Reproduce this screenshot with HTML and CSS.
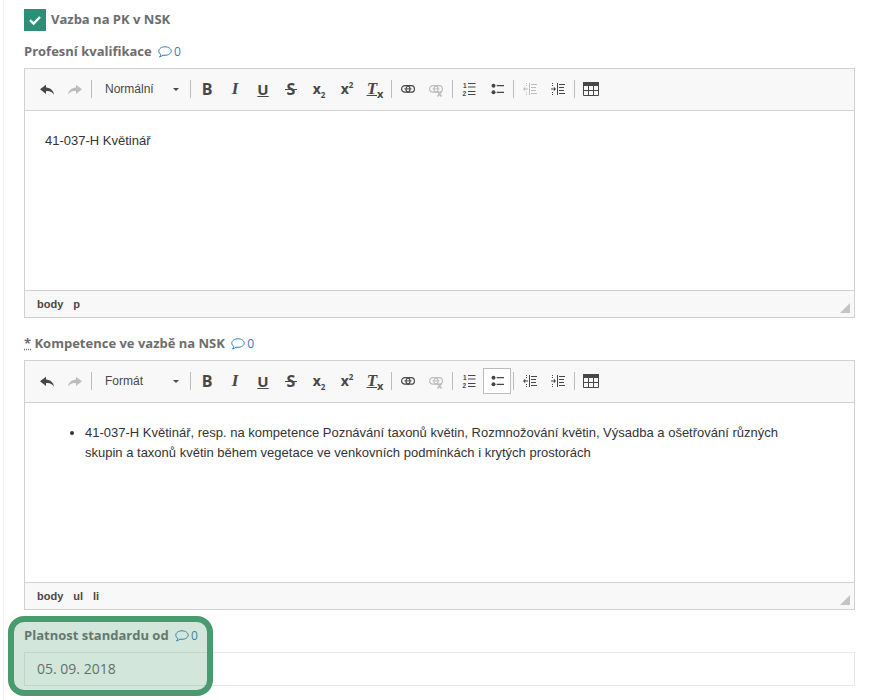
FILE: index.html
```html
<!DOCTYPE html>
<html lang="cs">
<head>
<meta charset="utf-8">
<title>Standard</title>
<link rel="stylesheet" href="styles.css">
</head>
<body>
<svg class="defs" width="0" height="0" aria-hidden="true">
  <symbol id="i-undo" viewBox="0 0 16 16"><path d="M7 3.700 1 8.300l6 4.600V10.200c3.500-.5 6 .7 8 3.500C14.500 9.500 11.600 6.800 7 6.500z"/></symbol>
  <symbol id="i-redo" viewBox="0 0 16 16"><path d="M9 3.700l6 4.600-6 4.600V10.200c-3.500-.5-6 .7-8 3.500C1.500 9.500 4.400 6.800 9 6.500z"/></symbol>
  <symbol id="i-link" viewBox="0 0 16 16"><g fill="none" stroke="currentColor" stroke-width="1.200"><rect x="1.600" y="4.600" width="8.400" height="6.600" rx="3.300"/><rect x="6" y="4.600" width="8.400" height="6.600" rx="3.300"/></g><path d="M4.500 7.400h7v1h-7z"/></symbol>
  <symbol id="i-unlink" viewBox="0 0 16 16"><g fill="none" stroke="currentColor" stroke-width="1.200"><rect x="1.600" y="4.600" width="8.400" height="6.600" rx="3.300"/><rect x="6" y="4.600" width="8.400" height="6.600" rx="3.300"/></g><path d="M4.500 7.400h7v1h-7z"/><path d="M9.500 10.500l4 5M13.500 10.500l-4 5" stroke="currentColor" stroke-width="1.600"/></symbol>
  <symbol id="i-ul" viewBox="0 0 16 16"><circle cx="4.500" cy="4.700" r="2"/><circle cx="4.500" cy="11.300" r="2"/><path d="M7.700 4h7.300v1.200H7.700zM7.700 10.700h7.300v1.200H7.700z"/></symbol>
  <symbol id="i-outdent" viewBox="0 0 16 16"><path d="M7 2h1v12H7zM9 3h6v1H9zM9 6h5v1H9zM9 9h5v1H9zM9 12h6v1H9zM2 7.500h4v1H2zM1 8l2.200-2.200v4.400z"/><path d="M4 2h1v1H4zM4 4h1v1H4zM4 11h1v1H4zM4 13h1v1H4z"/></symbol>
  <symbol id="i-indent" viewBox="0 0 16 16"><path d="M7 2h1v12H7zM9 3h6v1H9zM9 6h5v1H9zM9 9h5v1H9zM9 12h6v1H9zM1 7.500h3v1H1zM6 8 3.800 5.800v4.400z"/><path d="M2 2h1v1H2zM2 4h1v1H2zM2 11h1v1H2zM2 13h1v1H2z"/></symbol>
  <symbol id="i-table" viewBox="0 0 16 16"><path d="M0 1h16v4H0z"/><path d="M.5 4.500h15v10H.5zM5.500 4.500v10M10.500 4.500v10M.5 9.500h15" fill="none" stroke="currentColor"/></symbol>
  <symbol id="i-comment" viewBox="0 0 14 12"><path d="M7 .800c3.300 0 6.200 1.800 6.200 4.300S10.300 9.300 7 9.300c-.7 0-1.300 0-2-.2-.9.8-2 1.500-3.500 1.900.7-.8 1.200-1.600 1.300-2.500C1.700 7.800.8 6.600.8 5.100.8 2.600 3.700.8 7 .800z" fill="none" stroke="currentColor" stroke-width="1"/></symbol>
</svg>

<main class="page">
  <div class="check-row">
    <span class="checkbox"><svg viewBox="0 0 22 22" width="22" height="22"><path d="M6 11.200l3.600 3.400L16 8" fill="none" stroke="#fff" stroke-width="2.400"/></svg></span>
    <span class="check-label">Vazba na PK v NSK</span>
  </div>

  <div class="field">
    <div class="label">Profesní kvalifikace <span class="comments"><svg class="c-icon"><use href="#i-comment"/></svg>0</span></div>
    <div class="editor">
      <div class="toolbar">
        <span class="btn"><svg class="ico"><use href="#i-undo"/></svg></span>
        <span class="btn off"><svg class="ico"><use href="#i-redo"/></svg></span>
        <span class="sep"></span>
        <span class="combo"><span>Normální</span><span class="caret"></span></span>
        <span class="sep"></span>
        <span class="btn"><span class="g g-b">B</span></span>
        <span class="btn"><span class="g g-i">I</span></span>
        <span class="btn"><span class="g g-u">U</span></span>
        <span class="btn"><span class="g g-s">S</span></span>
        <span class="btn"><span class="g g-x">x<sub>2</sub></span></span>
        <span class="btn"><span class="g g-x">x<sup>2</sup></span></span>
        <span class="btn"><span class="g g-t"><span class="g-tt">T</span><sub>x</sub></span></span>
        <span class="sep"></span>
        <span class="btn"><svg class="ico"><use href="#i-link"/></svg></span>
        <span class="btn off"><svg class="ico"><use href="#i-unlink"/></svg></span>
        <span class="sep"></span>
        <span class="btn"><svg class="ico" viewBox="0 0 16 16"><path d="M7 2h7.500v1H7zM7 5.500h7.500v1H7zM7 10h7.500v1H7zM7 13h7.500v1H7z"/><text x="2" y="7" class="num">1</text><text x="1.500" y="14.500" class="num">2</text></svg></span>
        <span class="btn"><svg class="ico"><use href="#i-ul"/></svg></span>
        <span class="sep"></span>
        <span class="btn off"><svg class="ico"><use href="#i-outdent"/></svg></span>
        <span class="btn"><svg class="ico"><use href="#i-indent"/></svg></span>
        <span class="sep"></span>
        <span class="btn"><svg class="ico"><use href="#i-table"/></svg></span>
      </div>
      <div class="content"><p>41-037-H Květinář</p></div>
      <div class="path"><span>body</span><span>p</span><i class="grip"></i></div>
    </div>
  </div>

  <div class="field">
    <div class="label"><abbr class="req">*</abbr> Kompetence ve vazbě na NSK <span class="comments"><svg class="c-icon"><use href="#i-comment"/></svg>0</span></div>
    <div class="editor">
      <div class="toolbar">
        <span class="btn"><svg class="ico"><use href="#i-undo"/></svg></span>
        <span class="btn off"><svg class="ico"><use href="#i-redo"/></svg></span>
        <span class="sep"></span>
        <span class="combo"><span>Formát</span><span class="caret"></span></span>
        <span class="sep"></span>
        <span class="btn"><span class="g g-b">B</span></span>
        <span class="btn"><span class="g g-i">I</span></span>
        <span class="btn"><span class="g g-u">U</span></span>
        <span class="btn"><span class="g g-s">S</span></span>
        <span class="btn"><span class="g g-x">x<sub>2</sub></span></span>
        <span class="btn"><span class="g g-x">x<sup>2</sup></span></span>
        <span class="btn"><span class="g g-t"><span class="g-tt">T</span><sub>x</sub></span></span>
        <span class="sep"></span>
        <span class="btn"><svg class="ico"><use href="#i-link"/></svg></span>
        <span class="btn off"><svg class="ico"><use href="#i-unlink"/></svg></span>
        <span class="sep"></span>
        <span class="btn"><svg class="ico" viewBox="0 0 16 16"><path d="M7 2h7.500v1H7zM7 5.500h7.500v1H7zM7 10h7.500v1H7zM7 13h7.500v1H7z"/><text x="2" y="7" class="num">1</text><text x="1.500" y="14.500" class="num">2</text></svg></span>
        <span class="btn on"><svg class="ico"><use href="#i-ul"/></svg></span>
        <span class="sep"></span>
        <span class="btn"><svg class="ico"><use href="#i-outdent"/></svg></span>
        <span class="btn"><svg class="ico"><use href="#i-indent"/></svg></span>
        <span class="sep"></span>
        <span class="btn"><svg class="ico"><use href="#i-table"/></svg></span>
      </div>
      <div class="content"><ul><li>41-037-H Květinář, resp. na kompetence Poznávání taxonů květin, Rozmnožování květin, Výsadba a ošetřování různých skupin a taxonů květin během vegetace ve venkovních podmínkách i krytých prostorách</li></ul></div>
      <div class="path"><span>body</span><span>ul</span><span>li</span><i class="grip"></i></div>
    </div>
  </div>

  <div class="field date-field">
    <div class="label">Platnost standardu od <span class="comments"><svg class="c-icon"><use href="#i-comment"/></svg>0</span></div>
    <div class="date-input">05. 09. 2018</div>
    <div class="highlight"></div>
  </div>
</main>
</body>
</html>
```
FILE: styles.css
```css
html, body { margin: 0; padding: 0; background: #fff; }
body { height: 700px; overflow: hidden; font-family: "Open Sans", sans-serif; }
.defs { position: absolute; }
.page {
  margin-left: 3px;
  border-left: 1px solid #eeeeee;
  padding: 9px 15px 0 20px;
  height: 691px;
}
.check-row { display: flex; align-items: center; gap: 5px; height: 22px; }
.checkbox { width: 22px; height: 22px; background: #2c8f78; display: block; }
.checkbox svg { display: block; }
.check-label { font-size: 13px; font-weight: 700; color: #6d6d6d; padding-bottom: 2px; }
.field { margin-top: 11px; }
.field + .field { margin-top: 16px; }
.label { height: 18px; line-height: 18px; margin-bottom: 8px; font-size: 13px; font-weight: 700; color: #6d6d6d; white-space: nowrap; }
.req { text-decoration: underline dotted; }
.comments { display: inline-flex; align-items: center; gap: 2px; font-weight: 400; font-size: 12px; color: #337ab7; margin: 1px 0 0 3px; vertical-align: top; }
.c-icon { width: 14px; height: 12px; }
.editor { border: 1px solid #d1d1d1; height: 248px; display: flex; flex-direction: column; }
.toolbar {
  height: 42px;
  box-sizing: border-box;
  padding: 0 0 1px 8px;
  display: flex;
  align-items: center;
  background: #f8f8f8;
  border-bottom: 1px solid #d1d1d1;
  flex: none;
}
.btn { width: 28px; height: 26px; box-sizing: border-box; display: flex; align-items: center; justify-content: center; color: #474747; flex: none; }
.btn.off { color: #bdbdbd; }
.btn.on { background: #fff; border: 1px solid #bcbcbc; }
.ico { width: 16px; height: 16px; fill: currentColor; display: block; }
.num { font: 700 6.500px "Liberation Sans", sans-serif; }
.sep { width: 1px; height: 18px; background: #bcbcbc; margin: 0 2px; flex: none; }
.combo { width: 94px; box-sizing: border-box; padding: 0 9px 0 11px; display: flex; align-items: center; justify-content: space-between; font: 12px "Liberation Sans", sans-serif; color: #484848; flex: none; }
.caret { width: 0; height: 0; border: 3px solid transparent; border-top-color: #484848; border-bottom: 0; }
.g { font-family: "Open Sans", sans-serif; font-weight: 700; line-height: 16px; color: #474747; }
.g-b { font-size: 16px; }
.g-i { font-size: 17px; font-style: italic; font-family: "Liberation Serif", serif; }
.g-u { font-size: 15px; text-decoration: underline; }
.g-s { font-size: 16px; padding: 0 2px; background: linear-gradient(#474747, #474747) center / 100% 1px no-repeat; }
.g-x { font-size: 14px; white-space: nowrap; }
.g-x sub, .g-x sup { font-size: 8px; line-height: 0; }
.g-t { font-size: 17px; font-style: italic; font-family: "Liberation Serif", serif; white-space: nowrap; }
.g-tt { text-decoration: underline; }
.g-t sub { font-size: 11px; line-height: 0; font-family: "Open Sans", sans-serif; font-style: normal; }
.content { flex: 1; padding: 20px 20px 0; font: 13px/20px "Liberation Sans", sans-serif; color: #333; min-height: 0; }
.content p { margin: 0; }
.content ul { margin: 0; padding: 0 40px 0 40px; }
.path {
  height: 27px;
  box-sizing: border-box;
  border-top: 1px solid #d1d1d1;
  background: #f8f8f8;
  padding: 0 4px 0 12px;
  display: flex;
  align-items: center;
  gap: 10px;
  font: 700 11px "Liberation Sans", sans-serif;
  color: #484848;
  flex: none;
}
.grip { margin-left: auto; width: 0; height: 0; border-style: solid; border-width: 0 0 10px 10px; border-color: transparent transparent #c4c4c4 transparent; align-self: flex-end; margin-bottom: 4px; }
.date-field { position: relative; }
.date-input { height: 34px; box-sizing: border-box; border: 1px solid #e8e8e8; padding-left: 12px; line-height: 32px; font-size: 14px; color: #666; }
.highlight {
  position: absolute;
  left: -16px;
  top: -10px;
  width: 205px;
  height: 80px;
  box-sizing: border-box;
  border: 6px solid #4a9a70;
  border-radius: 16px;
  background: rgba(74, 154, 112, 0.25);
}
```
